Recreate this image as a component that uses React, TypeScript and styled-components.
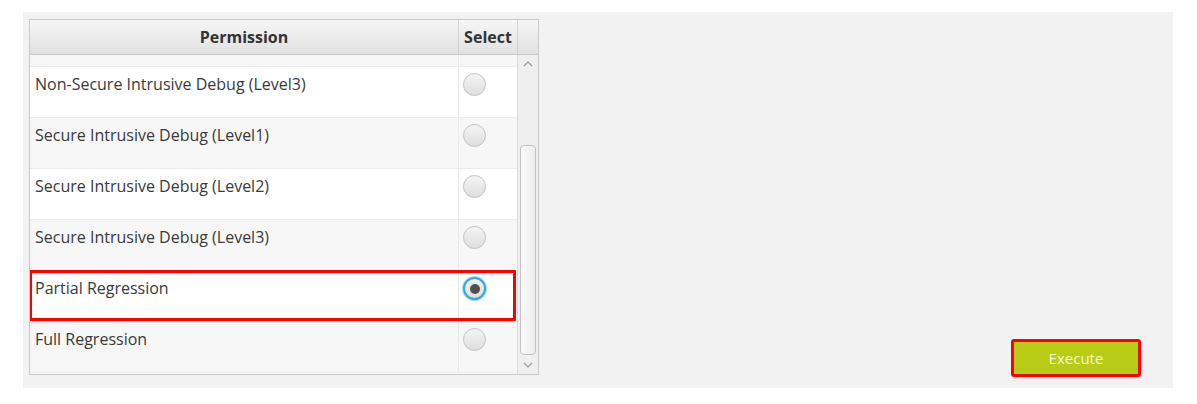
import React from 'react';
import styled, { createGlobalStyle } from 'styled-components';

type Permission = {
    label: string,
    selected?: boolean,
    marked?: boolean
};

const permissions: Permission[] = [
    { label: 'Non-Secure Intrusive Debug (Level3)' },
    { label: 'Secure Intrusive Debug (Level1)' },
    { label: 'Secure Intrusive Debug (Level2)' },
    { label: 'Secure Intrusive Debug (Level3)' },
    { label: 'Partial Regression', selected: true, marked: true },
    { label: 'Full Regression' }
];

const GlobalStyle = createGlobalStyle`
    body {
        margin: 0;
        background: #ffffff;
        font-family: "Open Sans", "Noto Sans", sans-serif;
        color: #333333;
    }
`;

const Page = styled.div`
    padding: 12px 24px 16px 23px;
`;

const Panel = styled.div`
    width: 1150px;
    height: 376px;
    box-sizing: border-box;
    background: #f2f2f2;
    padding: 7px 32px 11px 6px;
    display: flex;
    justify-content: space-between;
`;

const Table = styled.div`
    width: 510px;
    height: 356px;
    box-sizing: border-box;
    border: 1px solid #c9c9c9;
    background: #f8f8f8;
    display: grid;
    grid-template-columns: 487px 1fr;
    grid-template-rows: 35px 1fr;
    overflow: hidden;
`;

const HeaderRow = styled.div`
    display: grid;
    grid-template-columns: 429px 58px;
    background: linear-gradient(#f6f6f6, #e1e1e1);
    border-bottom: 1px solid #c8c8c8;
`;

const HeaderCell = styled.div<{ $last?: boolean }>`
    display: flex;
    align-items: center;
    justify-content: center;
    font-weight: 700;
    font-size: 16px;
    color: #333333;
    border-right: ${p => (p.$last ? 'none' : '1px solid #d2d2d2')};
`;

const Corner = styled.div`
    background: linear-gradient(#f6f6f6, #e1e1e1);
    border-bottom: 1px solid #c8c8c8;
    border-left: 1px solid #d2d2d2;
`;

const Body = styled.div`
    overflow: hidden;
    display: flex;
    flex-direction: column;
`;

const Row = styled.div<{ $odd: boolean }>`
    position: relative;
    flex: none;
    height: 50px;
    display: grid;
    grid-template-columns: 429px 58px;
    background: ${p => (p.$odd ? '#f7f7f7' : '#ffffff')};
    border-bottom: 1px solid #ececec;
`;

const ClippedRow = styled(Row)`
    height: 11px;
`;

const Mark = styled.div`
    position: absolute;
    left: -1px;
    top: -1px;
    width: 487px;
    height: 51px;
    box-sizing: border-box;
    border: 3px solid #ff0000;
    border-radius: 1px;
    pointer-events: none;
`;

const LabelCell = styled.div`
    padding: 7px 0 0 5px;
    font-size: 16px;
    line-height: 20px;
    color: #3a3a3a;
    border-right: 1px solid #e9e9e9;
`;

const SelectCell = styled.div`
    padding: 6px 0 0 4px;
`;

const Radio = styled.span<{ $on?: boolean }>`
    display: flex;
    align-items: center;
    justify-content: center;
    width: 23px;
    height: 23px;
    box-sizing: border-box;
    border-radius: 50%;
    border: ${p => (p.$on ? '2px solid #2fa8df' : '1px solid #c2c2c2')};
    background: linear-gradient(#f4f4f4, #dedede);
    box-shadow: ${p => (p.$on ? '0 0 1px 1px #9fd6ef' : 'none')};

    &::after {
        content: '';
        display: ${p => (p.$on ? 'block' : 'none')};
        width: 10px;
        height: 10px;
        border-radius: 50%;
        background: #505050;
    }
`;

const ScrollBar = styled.div`
    display: flex;
    flex-direction: column;
    align-items: center;
    background: #efefef;
    border-left: 1px solid #dcdcdc;
`;

const Arrow = styled.div`
    height: 18px;
    display: flex;
    align-items: center;
    justify-content: center;
`;

const Track = styled.div`
    flex: 1;
    width: 100%;
    display: flex;
    flex-direction: column;
    align-items: center;
    padding-top: 72px;
    box-sizing: border-box;
`;

const Thumb = styled.div`
    width: 16px;
    height: 210px;
    box-sizing: border-box;
    border: 1px solid #c2c2c2;
    border-radius: 4px;
    background: linear-gradient(90deg, #fafafa, #ececec);
`;

const ExecuteButton = styled.button`
    align-self: flex-end;
    width: 130px;
    height: 38px;
    box-sizing: border-box;
    border: 3px solid #ff0000;
    border-radius: 3px;
    background: #b8cb16;
    color: #f4f8cc;
    font-family: "Open Sans", "Noto Sans", sans-serif;
    font-size: 15px;
    cursor: pointer;
`;

const Chevron = ({ up }: { up?: boolean }) => (
    <svg width="10" height="6" viewBox="0 0 10 6">
        <path
            d={up ? 'M1 5 L5 1 L9 5' : 'M1 1 L5 5 L9 1'}
            fill="none"
            stroke="#999999"
            strokeWidth="1.2"
        />
    </svg>
);

export default function App() {
    return (
        <Page>
            <GlobalStyle/>
            <Panel>
                <Table>
                    <HeaderRow>
                        <HeaderCell>Permission</HeaderCell>
                        <HeaderCell $last>Select</HeaderCell>
                    </HeaderRow>
                    <Corner/>
                    <Body>
                        <ClippedRow $odd>
                            <LabelCell/>
                            <SelectCell/>
                        </ClippedRow>
                        {permissions.map((item, i) => (
                            <Row key={item.label} $odd={i % 2 === 1}>
                                <LabelCell>{item.label}</LabelCell>
                                <SelectCell>
                                    <Radio $on={item.selected}/>
                                </SelectCell>
                                {item.marked && <Mark/>}
                            </Row>
                        ))}
                    </Body>
                    <ScrollBar>
                        <Arrow><Chevron up/></Arrow>
                        <Track>
                            <Thumb/>
                        </Track>
                        <Arrow><Chevron/></Arrow>
                    </ScrollBar>
                </Table>
                <ExecuteButton>Execute</ExecuteButton>
            </Panel>
        </Page>
    );
}
